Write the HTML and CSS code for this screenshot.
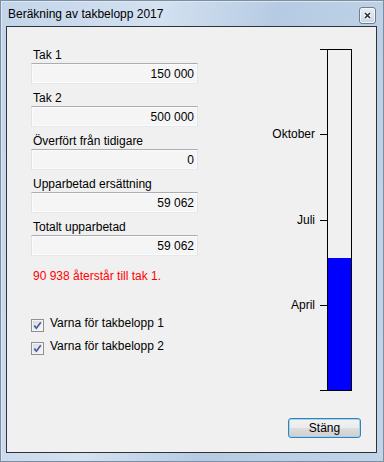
FILE: index.html
```html
<!DOCTYPE html>
<html lang="sv">
<head>
<meta charset="UTF-8">
<meta name="viewport" content="width=device-width, initial-scale=1.0">
<title>Beräkning av takbelopp 2017</title>
<link rel="stylesheet" href="styles.css">
</head>
<body>

<div class="window">
    <div class="titlebar">
        <span class="title">Beräkning av takbelopp 2017</span>
        <span class="close">
            <svg width="9" height="9" viewBox="0 0 9 9">
                <path d="M2 2 L7 7 M7 2 L2 7" stroke="#fff" stroke-width="3.4" fill="none"/>
                <path d="M2 2 L7 7 M7 2 L2 7" stroke="#2b2b2b" stroke-width="1.6" fill="none"/>
            </svg>
        </span>
    </div>

    <div class="client">
        <div class="main">
            <div class="form">
                <div class="field">
                    <label for="tak1">Tak 1</label>
                    <input class="num" id="tak1" type="text" value="150 000" readonly>
                </div>
                <div class="field">
                    <label for="tak2">Tak 2</label>
                    <input class="num" id="tak2" type="text" value="500 000" readonly>
                </div>
                <div class="field">
                    <label for="overfort">Överfört från tidigare</label>
                    <input class="num" id="overfort" type="text" value="0" readonly>
                </div>
                <div class="field">
                    <label for="ersattning">Upparbetad ersättning</label>
                    <input class="num" id="ersattning" type="text" value="59 062" readonly>
                </div>
                <div class="field">
                    <label for="totalt">Totalt upparbetad</label>
                    <input class="num" id="totalt" type="text" value="59 062" readonly>
                </div>

                <p class="remaining">90 938 återstår till tak 1.</p>

                <!-- warning options -->
                <div class="check">
                    <span class="box">
                        <svg width="9" height="9" viewBox="0 0 9 9"><path d="M1.3 4.6 L3.4 7.2 L7.8 1.2" stroke="#4a5d9c" stroke-width="1.7" fill="none"/></svg>
                    </span>
                    <span>Varna för takbelopp 1</span>
                </div>
                <div class="check">
                    <span class="box">
                        <svg width="9" height="9" viewBox="0 0 9 9"><path d="M1.3 4.6 L3.4 7.2 L7.8 1.2" stroke="#4a5d9c" stroke-width="1.7" fill="none"/></svg>
                    </span>
                    <span>Varna för takbelopp 2</span>
                </div>
            </div>

            <div class="chart">
                <div class="axis">
                    <span class="tick" style="--f: 1"></span>
                    <span class="tick" style="--f: 0.75"></span>
                    <span class="month" style="--f: 0.75">Oktober</span>
                    <span class="tick" style="--f: 0.5"></span>
                    <span class="month" style="--f: 0.5">Juli</span>
                    <span class="tick" style="--f: 0.25"></span>
                    <span class="month" style="--f: 0.25">April</span>
                    <span class="tick" style="--f: 0"></span>
                </div>
                <div class="bar">
                    <div class="fill" style="height: 38.8%"></div>
                </div>
            </div>
        </div>

        <div class="footer">
            <button class="btn">Stäng</button>
        </div>
    </div>
</div>

</body>
</html>
```

FILE: styles.css
```css
body {
    margin: 0;
    font-family: 'Liberation Sans', Arial, sans-serif;
    font-size: 12px;
    color: #000;
}

/* Window frame */
.window {
    box-sizing: border-box;
    width: 384px;
    height: 462px;
    display: flex;
    flex-direction: column;
    padding: 0 6px 8px 5px;
    border: 1px solid #7d8ea3;
    background: linear-gradient(100deg, #c3d5ea 0%, #d3e1f0 35%, #b6cbe3 60%, #c2d4e8 100%);
    box-shadow: inset 1px 1px 0 #dde8f3;
}

.titlebar {
    height: 25px;
    display: flex;
    align-items: flex-start;
    justify-content: space-between;
}

.title {
    padding-left: 2px;
    margin-top: 6px;
    line-height: 15px;
}

.close {
    box-sizing: border-box;
    width: 17px;
    height: 17px;
    margin-top: 6px;
    margin-right: 1px;
    display: flex;
    align-items: center;
    justify-content: center;
    border: 1px solid #6f7d8f;
    border-radius: 3px;
    background: linear-gradient(#e9eff6, #c9d6e4);
    box-shadow: inset 0 0 0 1px #f2f6fa;
}

/* Client area */
.client {
    flex: 1;
    display: flex;
    flex-direction: column;
    border: 1px solid #2f3338;
    background-color: #f0f0f0;
}

.main {
    flex: 1;
    display: flex;
    justify-content: space-between;
}

.form {
    padding: 21px 0 0 24px;
}

.field {
    margin-bottom: 7px;
}

.field label {
    display: block;
    height: 15px;
    line-height: 15px;
    padding-left: 2px;
}

.num {
    box-sizing: border-box;
    display: block;
    width: 167px;
    height: 21px;
    margin: 0;
    padding: 0 3px 0 0;
    text-align: right;
    font-family: inherit;
    font-size: 12px;
    color: #000;
    background-color: #f5f5f5;
    border: 1px solid #e2e3ea;
    border-top-color: #abadb3;
    border-bottom-color: #e3e9ef;
    box-shadow: inset 0 0 0 1px #fbfbfb;
    outline: none;
}

.remaining {
    margin: 13px 0 0 2px;
    line-height: 15px;
    color: #ff0000;
}

.check {
    display: flex;
    align-items: flex-start;
    height: 15px;
    line-height: 15px;
    margin-top: 8px;
}

.remaining + .check {
    margin-top: 32px;
}

.box {
    box-sizing: border-box;
    width: 13px;
    height: 13px;
    margin-top: 3px;
    margin-right: 6px;
    display: flex;
    align-items: center;
    justify-content: center;
    border: 1px solid #8e8f8f;
    background: linear-gradient(135deg, #d6d8dc, #fafafa);
    box-shadow: inset 0 0 0 1px #f4f4f4;
}

/* Year gauge */
.chart {
    display: flex;
    padding-top: 22px;
    margin-right: 24px;
}

.axis {
    position: relative;
    width: 70px;
    height: 342px;
}

.tick {
    position: absolute;
    right: 0;
    bottom: calc(var(--f) * 341px);
    width: 7px;
    height: 1px;
    background-color: #000;
}

.month {
    position: absolute;
    right: 12px;
    bottom: calc(var(--f) * 341px - 7px);
    line-height: 15px;
    white-space: nowrap;
}

.bar {
    box-sizing: border-box;
    width: 25px;
    height: 342px;
    display: flex;
    flex-direction: column;
    justify-content: flex-end;
    border: 1px solid #000;
}

.fill {
    background-color: #0000ff;
}

/* Buttons */
.footer {
    display: flex;
    justify-content: flex-end;
    padding: 0 15px 14px 0;
}

.btn {
    box-sizing: border-box;
    width: 73px;
    height: 20px;
    padding: 0;
    font-family: inherit;
    font-size: 12px;
    color: #000;
    border: 1px solid #3c7fb1;
    border-radius: 3px;
    background: linear-gradient(#f2f2f2 0%, #ebebeb 50%, #dddddd 50%, #cfcfcf 100%);
    box-shadow: inset 0 0 0 1px #9fd5f3;
}
```
